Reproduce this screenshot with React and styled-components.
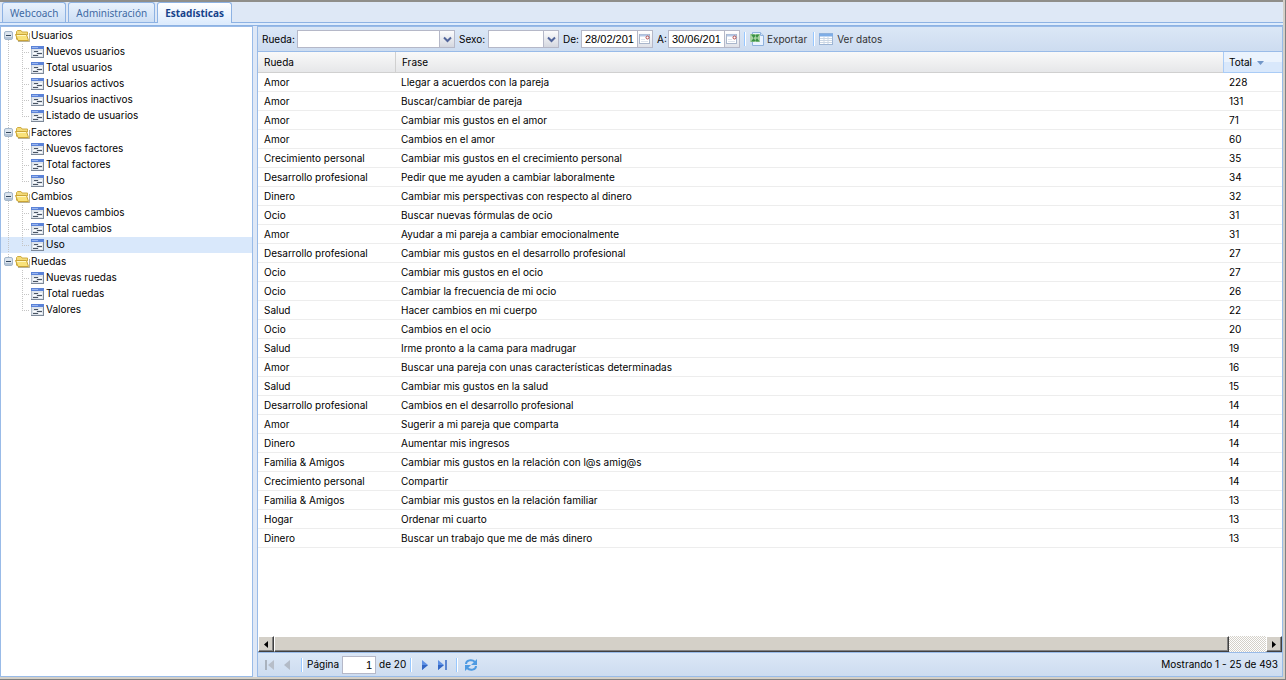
import { useState } from "react";
import styled, { createGlobalStyle, css } from "styled-components";

const GlobalStyle = createGlobalStyle`
  * {
    box-sizing: border-box;
  }
  body {
    margin: 0;
    background: #d4d0c8;
    color: #000;
    font: 10px/15px Inter, Arial, sans-serif;
  }
  button, input, select {
    font: inherit;
    color: inherit;
  }
`;

const Window = styled.div`
  display: flex;
  flex-direction: column;
  min-height: 100vh;
  padding: 0 2px 2px 0;
  background: #d4d0c8;
  border: solid #808080;
  border-width: 0 1px 1px 0;
`;

const TabStrip = styled.nav`
  display: flex;
  align-items: flex-end;
  gap: 2px;
  height: 23px;
  padding-left: 2px;
  background: #dee8f6;
  border-top: 2px solid #8f8e8a;
  border-bottom: 1px solid #8db2e3;
`;

const Tab = styled.button`
  height: 20px;
  padding: 0 7px;
  border: 1px solid #8db2e3;
  border-bottom: 0;
  border-radius: 3px 3px 0 0;
  background: linear-gradient(#e9f2fd, #cddff5);
  color: #416aa3;
  font: 10px/18px "Noto Sans", Tahoma, sans-serif;
  cursor: pointer;
  ${(props) =>
    props.$active &&
    css`
      height: 21px;
      margin-bottom: -1px;
      background: linear-gradient(#fff, #deecfd);
      color: #15428b;
      font-weight: bold;
    `}
`;

const TabSpacer = styled.div`
  height: 3px;
  background: #deecfd;
  border-bottom: 1px solid #8db2e3;
`;

const Body = styled.div`
  display: flex;
  flex: 1;
  gap: 4px;
  background: #dfe8f6;
`;

const Sidebar = styled.aside`
  flex: none;
  width: 253px;
  padding-top: 1px;
  background: #fff;
  border: 1px solid #99bbe8;
`;

const TreeList = styled.ul`
  margin: 0;
  padding: 0;
  list-style: none;
`;

const TreeGroup = styled.li`
  &:nth-child(odd) {
    padding-bottom: 1px;
  }
`;

const TreeRow = styled.a`
  display: flex;
  align-items: flex-start;
  height: 16px;
  color: #000;
  text-decoration: none;
  white-space: nowrap;
  background: ${(props) => (props.$selected ? "#d9e8fb" : "transparent")};
`;

const Main = styled.main`
  display: flex;
  flex-direction: column;
  flex: 1;
  min-width: 0;
  background: #fff;
  border: 1px solid #99bbe8;
`;

const Toolbar = styled.div`
  display: flex;
  align-items: center;
  height: 25px;
  background: linear-gradient(#dbe7f6, #cddcf0);
  border-bottom: 1px solid #99bbe8;
`;

const FieldLabel = styled.label`
  flex: none;
  width: ${(props) => props.$width}px;
  margin-left: 4px;
  white-space: nowrap;
`;

const Field = styled.div`
  position: relative;
  display: flex;
  flex: none;
  width: ${(props) => props.$width}px;
  height: 18px;
`;

const Combo = styled.select`
  width: 100%;
  padding: 0 20px 0 3px;
  appearance: none;
  background: #fff;
  border: 1px solid #b5b8c8;
  border-radius: 0;
`;

const DateInput = styled.input`
  flex: 1;
  min-width: 0;
  padding: 0 3px;
  background: #fff;
  border: 1px solid #b5b8c8;
  border-right: 0;
  font: 11px "Liberation Sans", Arial, sans-serif;
`;

const DateTrigger = styled.button`
  display: flex;
  align-items: center;
  justify-content: center;
  width: 16px;
  padding: 0;
  background: linear-gradient(#fff, #dfe1e8);
  border: 1px solid #b5b8c8;
`;

const ComboTrigger = styled.span`
  position: absolute;
  top: 0;
  right: 0;
  display: flex;
  align-items: center;
  justify-content: center;
  width: 16px;
  height: 18px;
  background: linear-gradient(#fcfcfd, #d5d8e0);
  border: 1px solid #b5b8c8;
  pointer-events: none;
`;

const Separator = styled.span`
  flex: none;
  width: 2px;
  height: 14px;
  margin: 0 4px;
  border-left: 1px solid #98c8ff;
  border-right: 1px solid #fff;
`;

const ToolButton = styled.button`
  display: flex;
  align-items: center;
  gap: 3px;
  padding: 0 2px 0 0;
  background: none;
  border: 0;
  color: #333;
  white-space: nowrap;
`;

const GridView = styled.div`
  flex: 1;
`;

const Grid = styled.table`
  width: 100%;
  table-layout: fixed;
  border-collapse: separate;
  border-spacing: 0;
`;

const HeadCell = styled.th`
  width: ${(props) => props.$width || "auto"};
  height: 21px;
  padding: 0 5px 0 6px;
  background: linear-gradient(#f9f9f9, #e6e7e9);
  border-bottom: 1px solid #d0d0d0;
  border-right: 1px solid #d0d0d0;
  font-weight: normal;
  text-align: left;
  ${(props) =>
    props.$sorted &&
    css`
      padding-left: 5px;
      background: linear-gradient(#ebf3fd 50%, #d9e8fb 50%);
      border-color: #aaccf6;
      border-right: 0;
      box-shadow: -1px 0 #aaccf6;
    `}
`;

const SortArrow = styled.svg`
  margin-left: 5px;
  vertical-align: middle;
`;

const Cell = styled.td`
  height: 19px;
  padding: 1px 5px 0 6px;
  border-bottom: 1px solid #ededed;
  overflow: hidden;
  white-space: nowrap;
  & + & {
    padding-left: 5px;
  }
`;

const ScrollBar = styled.div`
  display: flex;
  height: 16px;
  background: repeating-conic-gradient(#fff 0 25%, #d4d0c8 0 50%) 0 0 / 2px 2px;
`;

const ScrollPart = css`
  padding: 0;
  background: #d4d0c8;
  border: 1px solid;
  border-color: #fff #404040 #404040 #fff;
  box-shadow: inset -1px -1px #808080;
`;

const ScrollButton = styled.button`
  ${ScrollPart}
  display: flex;
  align-items: center;
  justify-content: center;
  width: 16px;
`;

const ScrollTrack = styled.div`
  display: flex;
  flex: 1;
  padding-right: 37px;
`;

const ScrollThumb = styled.div`
  ${ScrollPart}
  width: 100%;
`;

const PagingBar = styled(Toolbar)`
  height: 24px;
  padding: 0 4px 0 3px;
  border-top: 1px solid #99bbe8;
  border-bottom: 0;
`;

const PageButton = styled.button`
  display: flex;
  align-items: center;
  justify-content: center;
  width: 18px;
  height: 18px;
  padding: 0;
  background: none;
  border: 0;
`;

const PageInput = styled.input`
  width: 34px;
  height: 18px;
  margin: 0 3px;
  padding: 0 3px;
  background: #fff;
  border: 1px solid #b5b8c8;
  font: 11px "Liberation Sans", Arial, sans-serif;
  text-align: right;
`;

const Status = styled.span`
  margin-left: auto;
`;

const tabs = ["Webcoach", "Administración", "Estadísticas"];

const tree = [
  {
    name: "Usuarios",
    items: [
      "Nuevos usuarios",
      "Total usuarios",
      "Usuarios activos",
      "Usuarios inactivos",
      "Listado de usuarios",
    ],
  },
  { name: "Factores", items: ["Nuevos factores", "Total factores", "Uso"] },
  { name: "Cambios", items: ["Nuevos cambios", "Total cambios", "Uso"] },
  { name: "Ruedas", items: ["Nuevas ruedas", "Total ruedas", "Valores"] },
];

const rows = [
  ["Amor", "Llegar a acuerdos con la pareja", 228],
  ["Amor", "Buscar/cambiar de pareja", 131],
  ["Amor", "Cambiar mis gustos en el amor", 71],
  ["Amor", "Cambios en el amor", 60],
  ["Crecimiento personal", "Cambiar mis gustos en el crecimiento personal", 35],
  ["Desarrollo profesional", "Pedir que me ayuden a cambiar laboralmente", 34],
  ["Dinero", "Cambiar mis perspectivas con respecto al dinero", 32],
  ["Ocio", "Buscar nuevas fórmulas de ocio", 31],
  ["Amor", "Ayudar a mi pareja a cambiar emocionalmente", 31],
  ["Desarrollo profesional", "Cambiar mis gustos en el desarrollo profesional", 27],
  ["Ocio", "Cambiar mis gustos en el ocio", 27],
  ["Ocio", "Cambiar la frecuencia de mi ocio", 26],
  ["Salud", "Hacer cambios en mi cuerpo", 22],
  ["Ocio", "Cambios en el ocio", 20],
  ["Salud", "Irme pronto a la cama para madrugar", 19],
  ["Amor", "Buscar una pareja con unas características determinadas", 16],
  ["Salud", "Cambiar mis gustos en la salud", 15],
  ["Desarrollo profesional", "Cambios en el desarrollo profesional", 14],
  ["Amor", "Sugerir a mi pareja que comparta", 14],
  ["Dinero", "Aumentar mis ingresos", 14],
  ["Familia & Amigos", "Cambiar mis gustos en la relación con l@s amig@s", 14],
  ["Crecimiento personal", "Compartir", 14],
  ["Familia & Amigos", "Cambiar mis gustos en la relación familiar", 13],
  ["Hogar", "Ordenar mi cuarto", 13],
  ["Dinero", "Buscar un trabajo que me de más dinero", 13],
];

const dots = { stroke: "#c4c4c4", strokeDasharray: "1 1" };

const Expander = ({ first, last }) => (
  <svg width="14" height="16" viewBox="0 1 14 16">
    {!first && <path d="M7.5 1v3" {...dots} />}
    {!last && <path d="M7.5 13v4" {...dots} />}
    <rect x="3.5" y="4.5" width="8" height="8" rx="1.5" fill="#dbe4ee" stroke="#a3b6ca" />
    <path d="M4 10.5h7M4 11.500h7" stroke="#b4c4d6" />
    <path d="M5 8.500h5" stroke="#33475e" />
  </svg>
);

const Folder = () => (
  <svg width="16" height="16" viewBox="0 1 16 16">
    <path d="M3 14.500h11.500V6" fill="none" stroke="#8e8052" opacity=".6" />
    <path d="M1.500 12.500v-8l1-1h3.500l1 1.500h5.500v3" fill="#f3da78" stroke="#d0ad42" />
    <path d="M3 13.500L.5 7.500h11l2 6z" fill="#f9e27a" stroke="#caa436" />
    <path d="M2 8.500h9" stroke="#fff8c4" />
  </svg>
);

const Line = ({ hidden }) => (
  <svg width="14" height="16">{!hidden && <path d="M7.5 0v16" {...dots} />}</svg>
);

const Elbow = ({ last }) => (
  <svg width="16" height="16">
    <path d={`M7.5 0v${last ? 9 : 16}M9 8.500h6`} fill="none" {...dots} />
  </svg>
);

const Leaf = () => (
  <svg width="15" height="16">
    <rect x=".5" y="2.500" width="12" height="11" fill="#dfe5ec" stroke="#b4bfcc" />
    <path d="M0 3.500h13" stroke="#5b83d8" strokeWidth="3" />
    <path d="M1 3.500h6" stroke="#9ab6ee" />
    <path d="M12.500 5v9M0 13.500h13" stroke="#7c8898" />
    <path d="M3 7.500h4M6 9.500h5M2 11.500h5" stroke="#4b5563" />
    <path d="M8 7.500h3M2 9.500h3M8 11.500h3" stroke="#fff" />
  </svg>
);

const Chevron = () => (
  <svg width="9" height="7">
    <path d="M1 1.500l3.500 3.500L8 1.500" fill="none" stroke="#52659a" strokeWidth="2" />
  </svg>
);

const CalendarIcon = () => (
  <svg width="12" height="12">
    <rect x=".5" y="1.500" width="10" height="9" fill="#fff" stroke="#a9b6cb" />
    <path d="M1 2.500h9" stroke="#b5c8e6" strokeWidth="2" />
    <path d="M2 6.500h4M2 8.500h7" stroke="#dde3ec" />
    <circle cx="8.500" cy="4.500" r="1.500" fill="#fff" stroke="#b34a4a" />
  </svg>
);

const ExcelIcon = () => (
  <svg width="14" height="16">
    <path d="M2.500 1.500h8l3 3v10h-11z" fill="#eaf3ff" stroke="#8fb2dd" />
    <path d="M10.500 1.500v3h3" fill="#cfe0f5" stroke="#8fb2dd" />
    <path d="M0 3h10v8H0z" fill="#a9d3a4" />
    <path d="M1 3.500h3.500l5 7H6zM9.500 3.500h-3L1 10.500h3.500z" fill="#3a9144" />
  </svg>
);

const TableIcon = () => (
  <svg width="15" height="14">
    <rect x=".5" y="1.500" width="13" height="11" fill="#fff" stroke="#9db5d4" />
    <path d="M0 3h14" stroke="#7eade6" strokeWidth="3" />
    <path d="M1 6.500h12M1 8.500h12M1 10.500h12M5 5v7M9 5v7" stroke="#cbd7e5" />
  </svg>
);

const FirstIcon = () => (
  <svg width="12" height="12">
    <path d="M1 1h2v10H1z" fill="#a9b2be" />
    <path d="M10 1v10L4 6z" fill="#b7bec9" />
  </svg>
);

const PrevIcon = () => (
  <svg width="12" height="12">
    <path d="M8 1v10L2 6z" fill="#b3bbc7" />
  </svg>
);

const NextIcon = () => (
  <svg width="12" height="12">
    <path d="M3 1v10l6-5z" fill="#5e90e4" />
    <path d="M3 6v5l6-5z" fill="#3467c4" />
  </svg>
);

const LastIcon = () => (
  <svg width="12" height="12">
    <path d="M1 1v10l6-5z" fill="#5e90e4" />
    <path d="M1 6v5l6-5z" fill="#3467c4" />
    <path d="M8 1h2v10H8z" fill="#5c86d0" />
  </svg>
);

const RefreshIcon = () => (
  <svg width="14" height="14" fill="none" stroke="#4d9ae2" strokeWidth="2">
    <path d="M2 6c0-4 6-5 9-2" />
    <path d="M12 8c0 4-6 5-9 2" />
    <path d="M13 1v6H7zM1 13V7h6z" fill="#4d9ae2" stroke="none" />
  </svg>
);

const ComboBox = ({ id, width }) => (
  <Field $width={width}>
    <Combo id={id} defaultValue="">
      <option value=""></option>
    </Combo>
    <ComboTrigger>
      <Chevron />
    </ComboTrigger>
  </Field>
);

const DateField = ({ id, value }) => (
  <Field $width={72}>
    <DateInput id={id} defaultValue={value} />
    <DateTrigger aria-label="Calendario">
      <CalendarIcon />
    </DateTrigger>
  </Field>
);

const App = () => {
  const [tab, setTab] = useState("Estadísticas");
  const [selected, setSelected] = useState("Cambios/Uso");

  const handleSelect = (e, key) => {
    e.preventDefault();
    setSelected(key);
  };

  return (
    <Window>
      <GlobalStyle />
      <TabStrip>
        {tabs.map((name) => (
          <Tab key={name} $active={name === tab} onClick={() => setTab(name)}>
            {name}
          </Tab>
        ))}
      </TabStrip>
      <TabSpacer />
      <Body>
        <Sidebar>
          <TreeList>
            {tree.map((group, i) => {
              const last = i === tree.length - 1;
              return (
                <TreeGroup key={group.name}>
                  <TreeRow href="#" onClick={(e) => handleSelect(e, group.name)}>
                    <Expander first={i === 0} last={last} />
                    <Folder />
                    {group.name}
                  </TreeRow>
                  <TreeList>
                    {group.items.map((item, j) => {
                      const key = `${group.name}/${item}`;
                      return (
                        <li key={key}>
                          <TreeRow
                            href="#"
                            $selected={key === selected}
                            onClick={(e) => handleSelect(e, key)}
                          >
                            <Line hidden={last} />
                            <Elbow last={j === group.items.length - 1} />
                            <Leaf />
                            {item}
                          </TreeRow>
                        </li>
                      );
                    })}
                  </TreeList>
                </TreeGroup>
              );
            })}
          </TreeList>
        </Sidebar>
        <Main>
          <Toolbar>
            <FieldLabel $width={35} htmlFor="rueda">Rueda:</FieldLabel>
            <ComboBox id="rueda" width={158} />
            <FieldLabel $width={29} htmlFor="sexo">Sexo:</FieldLabel>
            <ComboBox id="sexo" width={71} />
            <FieldLabel $width={18} htmlFor="desde">De:</FieldLabel>
            <DateField id="desde" value="28/02/201" />
            <FieldLabel $width={11} htmlFor="hasta">A:</FieldLabel>
            <DateField id="hasta" value="30/06/201" />
            <Separator />
            <ToolButton>
              <ExcelIcon />
              Exportar
            </ToolButton>
            <Separator />
            <ToolButton>
              <TableIcon />
              Ver datos
            </ToolButton>
          </Toolbar>
          <GridView>
            <Grid>
              <thead>
                <tr>
                  <HeadCell $width="138px">Rueda</HeadCell>
                  <HeadCell>Frase</HeadCell>
                  <HeadCell $width="58px" $sorted>
                    Total
                    <SortArrow width="7" height="4">
                      <path d="M0 0h7L3.500 4z" fill="#7196c8" />
                    </SortArrow>
                  </HeadCell>
                </tr>
              </thead>
              <tbody>
                {rows.map(([rueda, frase, total]) => (
                  <tr key={rueda + frase}>
                    <Cell>{rueda}</Cell>
                    <Cell>{frase}</Cell>
                    <Cell>{total}</Cell>
                  </tr>
                ))}
              </tbody>
            </Grid>
          </GridView>
          <ScrollBar>
            <ScrollButton aria-label="Izquierda">
              <svg width="4" height="7">
                <path d="M4 0v7L0 3.500z" />
              </svg>
            </ScrollButton>
            <ScrollTrack>
              <ScrollThumb />
            </ScrollTrack>
            <ScrollButton aria-label="Derecha">
              <svg width="4" height="7">
                <path d="M0 0v7l4-3.500z" />
              </svg>
            </ScrollButton>
          </ScrollBar>
          <PagingBar>
            <PageButton aria-label="Primera página" disabled>
              <FirstIcon />
            </PageButton>
            <PageButton aria-label="Página anterior" disabled>
              <PrevIcon />
            </PageButton>
            <Separator />
            <label htmlFor="pagina">Página</label>
            <PageInput id="pagina" defaultValue="1" />
            <span>de 20</span>
            <Separator />
            <PageButton aria-label="Página siguiente">
              <NextIcon />
            </PageButton>
            <PageButton aria-label="Última página">
              <LastIcon />
            </PageButton>
            <Separator />
            <PageButton aria-label="Actualizar">
              <RefreshIcon />
            </PageButton>
            <Status>Mostrando 1 - 25 de 493</Status>
          </PagingBar>
        </Main>
      </Body>
    </Window>
  );
};

export default App;
